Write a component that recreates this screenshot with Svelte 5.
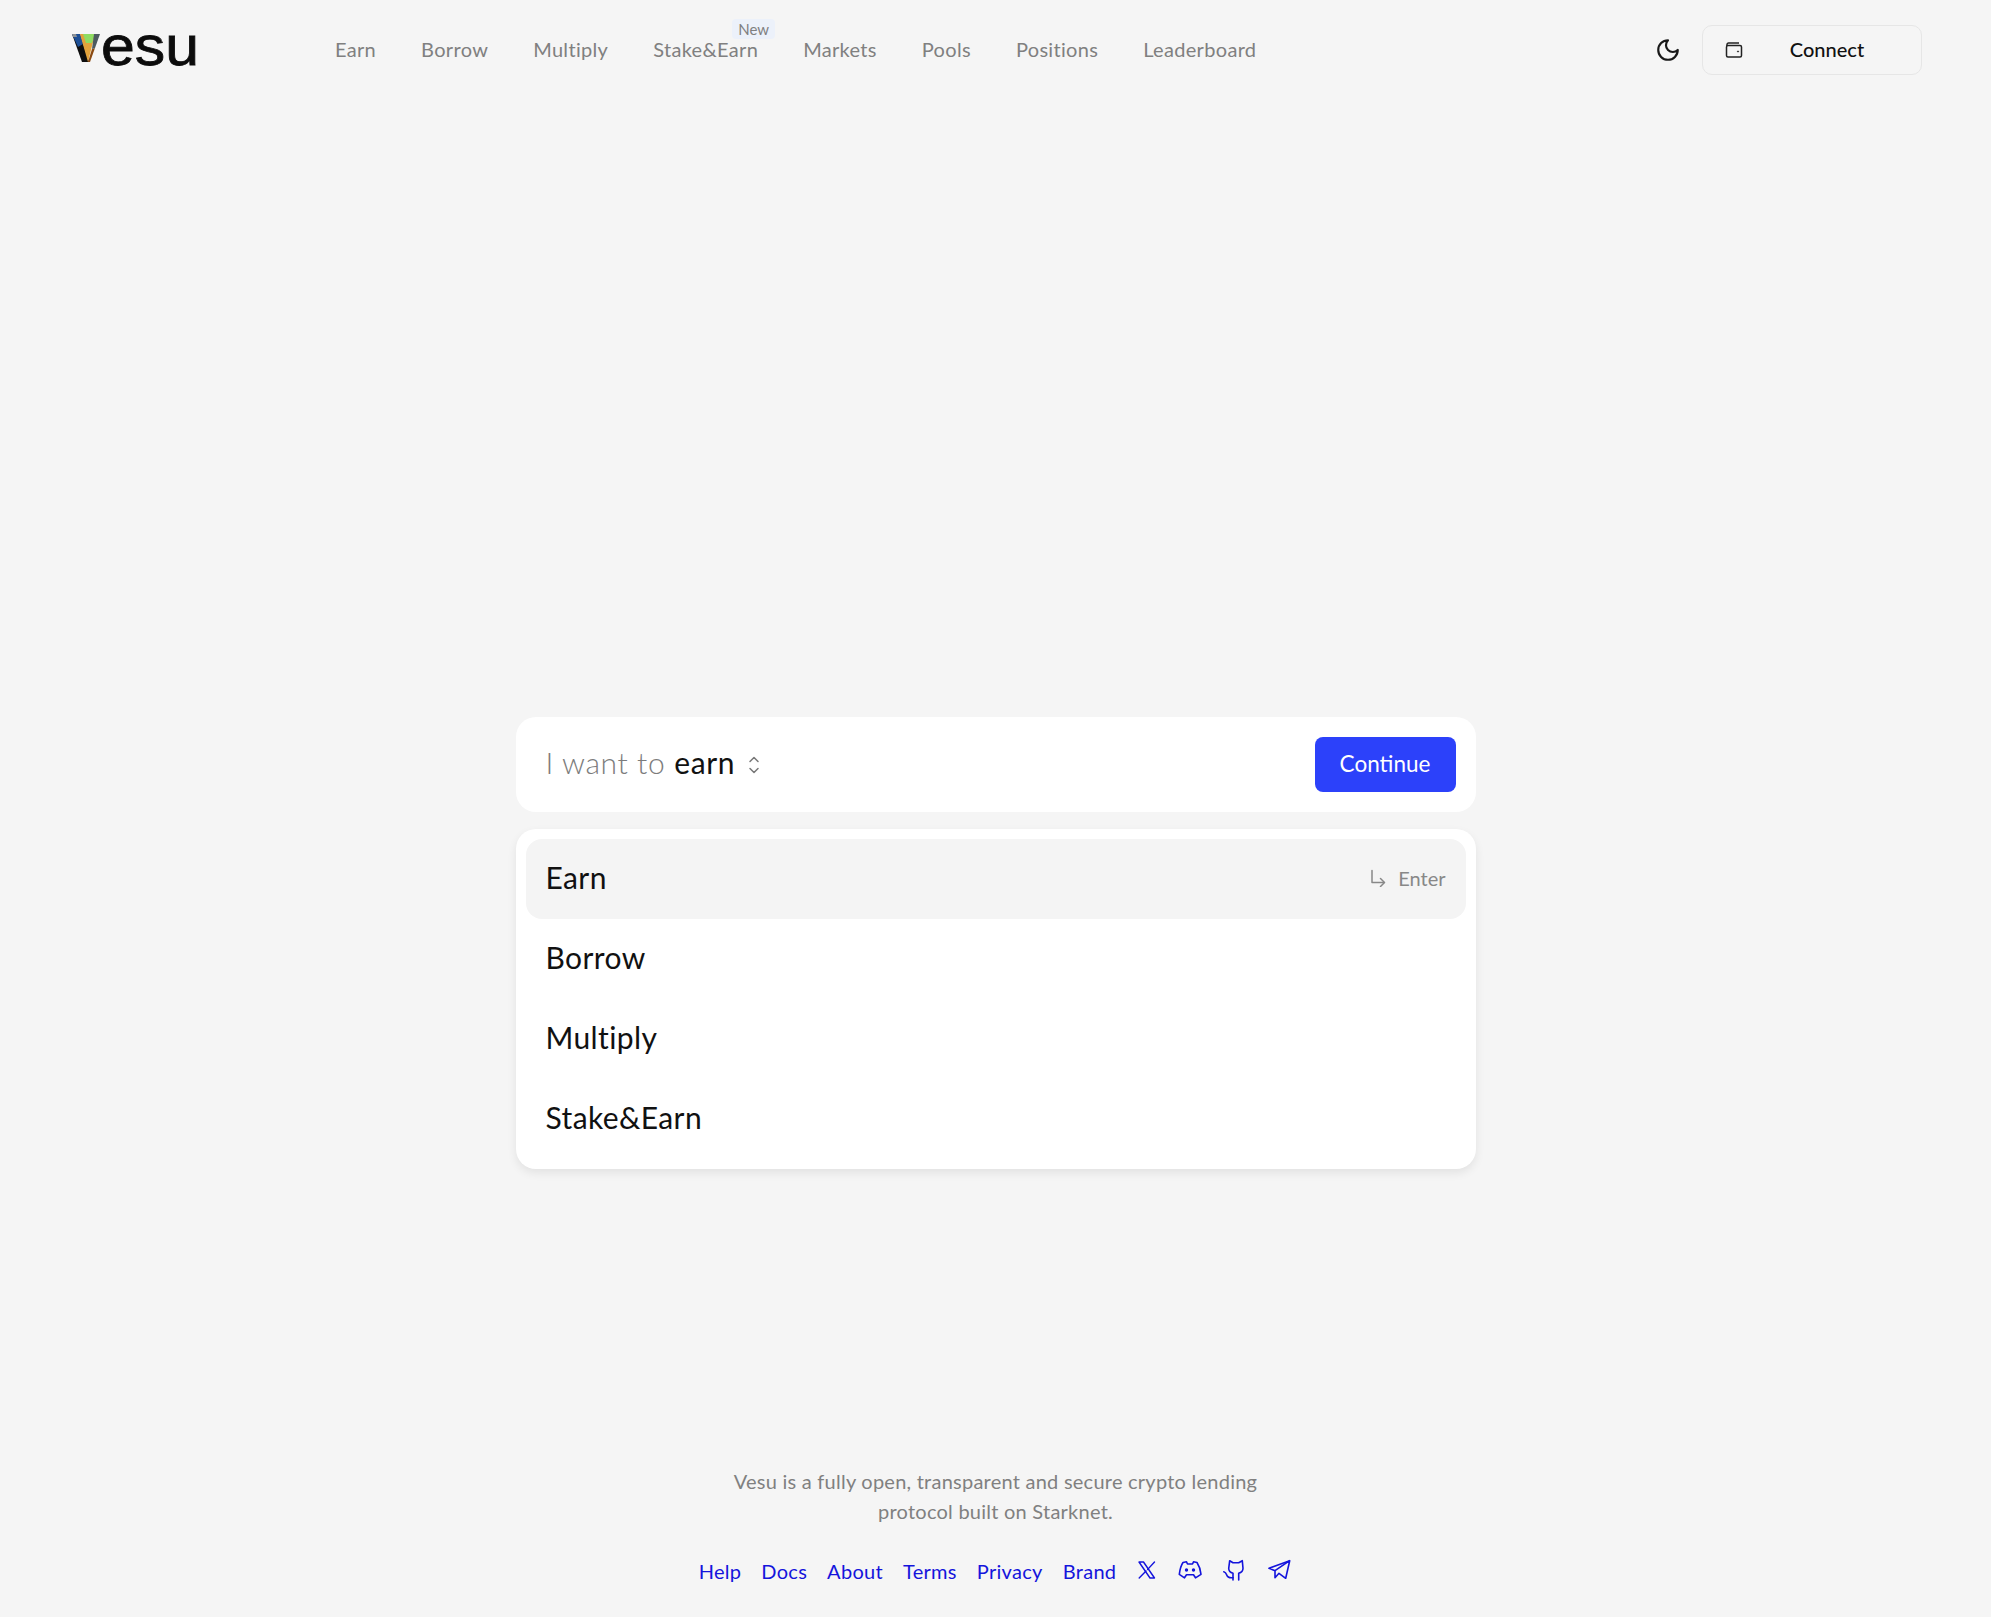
<script>
	const navItems = ['Earn', 'Borrow', 'Multiply', 'Stake&Earn', 'Markets', 'Pools', 'Positions', 'Leaderboard'];
	const options = ['Earn', 'Borrow', 'Multiply', 'Stake&Earn'];
	const footerLinks = ['Help', 'Docs', 'About', 'Terms', 'Privacy', 'Brand'];
</script>

<div class="page">
	<header class="header">
		<div class="logo">
			<svg class="logo-mark" width="29" height="30" viewBox="0 0 29 30">
				<path d="M0 1h8l9 28h-7z" fill="#0e0e0e" />
				<path d="M0 1h8l3 10-5 3z" fill="#1d4f96" />
				<path d="M0 1h4l1 3H1z" fill="#8d9296" />
				<path d="M8 1h15l-7 28z" fill="#e2a23b" />
				<path d="M11 1h12l-3 9h-6z" fill="#8fdc62" />
				<path d="M16 29l4-13 3-1-5 14z" fill="#8a4a12" />
				<path d="M22 1h6l-5 14-3 1z" fill="#4c5a60" />
			</svg>
			<span class="logo-text">esu</span>
		</div>
		<nav class="nav">
			{#each navItems as item}
				<a class="nav-link" href="#top">
					{item}
					{#if item === 'Stake&Earn'}
						<span class="badge">New</span>
					{/if}
				</a>
			{/each}
		</nav>
		<div class="actions">
			<svg class="moon" width="26" height="26" viewBox="0 0 24 24" fill="none" stroke="#181818" stroke-width="2" stroke-linecap="round" stroke-linejoin="round">
				<path d="M12 3a6 6 0 0 0 9 9 9 9 0 1 1-9-9Z" />
			</svg>
			<button class="connect">
				<svg width="20" height="20" viewBox="0 0 20 20" fill="none" stroke="#222" stroke-width="1.5" stroke-linejoin="round">
					<path d="M3 6V4.500A1.500 1.500 0 0 1 4.500 3H15" />
					<rect x="2.500" y="5.500" width="15" height="11.500" rx="1.500" />
					<circle cx="14" cy="11.500" r="0.600" fill="#222" stroke-width="0.800" />
				</svg>
				<span>Connect</span>
			</button>
		</div>
	</header>

	<main class="main">
		<div class="prompt card">
			<div class="sentence">
				<span class="muted">I want to</span>
				<span class="choice">earn</span>
				<svg width="12" height="20" viewBox="0 0 12 20" fill="none" stroke="#777" stroke-width="1.500" stroke-linecap="round" stroke-linejoin="round">
					<path d="M2 6.500l4-4 4 4" />
					<path d="M2 13.500l4 4 4-4" />
				</svg>
			</div>
			<button class="continue">Continue</button>
		</div>

		<ul class="options card">
			{#each options as option, i}
				<li class="option" class:active={i === 0}>
					<span class="label">{option}</span>
					{#if i === 0}
						<span class="enter">
							<svg width="16" height="18" viewBox="0 0 16 18" fill="none" stroke="#888" stroke-width="1.500" stroke-linecap="round" stroke-linejoin="round">
								<path d="M2 1.500v12h12" />
								<path d="M10.500 9.500l4 4-4 4" />
							</svg>
							Enter
						</span>
					{/if}
				</li>
			{/each}
		</ul>
	</main>

	<footer class="footer">
		<p class="blurb">Vesu is a fully open, transparent and secure crypto lending<br />protocol built on Starknet.</p>
		<div class="links">
			{#each footerLinks as link}
				<a href="#top">{link}</a>
			{/each}
			<div class="socials">
				<svg width="20" height="20" viewBox="0 0 20 20" fill="none" stroke="#1414dc" stroke-width="1.400" stroke-linejoin="round">
					<path d="M2 2h4.500l11 16H13z" />
					<path d="M17.500 2l-6.800 7.400M9 11l-6.800 7" stroke-linecap="round" />
				</svg>
				<svg width="24" height="22" viewBox="0 0 24 22" fill="none" stroke="#1414dc" stroke-width="1.600" stroke-linejoin="round">
					<path d="M5 3.500L8.500 2.800L9.500 5h5L15.500 2.800L19 3.500C21 6.500 22.500 11 23 15.300L17.500 18.800L15.500 15.800h-7L6.500 18.800L1.300 15.300C1.800 11 3 6.500 5 3.500Z" />
					<circle cx="8.500" cy="11" r="0.900" fill="#1414dc" />
					<circle cx="15.500" cy="11" r="0.900" fill="#1414dc" />
				</svg>
				<svg width="24" height="22" viewBox="0 0 24 22" fill="none" stroke="#1414dc" stroke-width="1.600" stroke-linecap="round" stroke-linejoin="round">
					<path d="M10 21v-6.700C7 13.500 5.700 12 5.700 9.300L6.700 1.700L10 3.700h5.700L19.300 1.700L20 9.300C20 12 18.500 13.500 15.700 14.300V21" />
					<path d="M10 18.700C6.500 19.200 4.500 18.500 3.500 15.500C3 14 2 13 .8 12.700" />
				</svg>
				<svg width="24" height="22" viewBox="0 0 24 22" fill="none" stroke="#1414dc" stroke-width="1.600" stroke-linejoin="round">
					<path d="M1 9.300L21.700 1.700L17.700 19.300L11 14.300L7 18.700V11.700Z" />
					<path d="M7 11.700L21.700 1.700" />
				</svg>
			</div>
		</div>
	</footer>
</div>

<style>
	:global(body) {
		background: #f5f5f5;
		font-family: Lato, "Open Sans", sans-serif;
		font-variant-ligatures: none;
	}

	.page {
		min-height: 1617px;
		display: flex;
		flex-direction: column;
	}

	.header {
		display: flex;
		align-items: center;
		height: 100px;
		padding: 0 69px 0 72px;
	}

	.logo {
		display: flex;
		align-items: center;
		width: 263px;
		height: 30px;
		margin-top: -4px;
	}

	.logo-mark {
		flex: none;
	}

	.logo-text {
		font-family: "Liberation Sans", sans-serif;
		font-size: 56px;
		line-height: 30px;
		color: #0c0c0c;
		margin-top: -4px;
		-webkit-text-stroke: 0.8px #0c0c0c;
		transform: scaleX(1.085);
		transform-origin: left center;
	}

	.nav {
		display: flex;
		gap: 45px;
		flex: 1;
		padding-bottom: 2px;
	}

	.nav-link {
		position: relative;
		font-size: 20px;
		letter-spacing: 0.32px;
		color: #808080;
		text-decoration: none;
	}

	.badge {
		position: absolute;
		top: -18px;
		right: -17px;
		padding: 1px 6px;
		font-size: 15px;
		letter-spacing: 0;
		line-height: 18px;
		border-radius: 4px;
		background: #ecf1fa;
	}

	.actions {
		display: flex;
		align-items: center;
		gap: 21px;
	}

	.connect {
		display: flex;
		align-items: center;
		width: 220px;
		height: 50px;
		padding: 0 11px 0 21px;
		background: transparent;
		border: 1px solid #e6e6e6;
		border-radius: 10px;
		font: 500 20px Lato, sans-serif;
		color: #111;
	}

	.connect span {
		flex: 1;
		text-align: center;
		padding-bottom: 2px;
	}

	.main {
		flex: 1;
		display: flex;
		flex-direction: column;
		align-items: center;
		gap: 17px;
		padding-top: 617px;
	}

	.card {
		width: 960px;
		background: #fff;
		border-radius: 20px;
		box-sizing: border-box;
	}

	.prompt {
		height: 95px;
		display: flex;
		align-items: center;
		justify-content: space-between;
		padding: 0 20px 0 30px;
	}

	.sentence {
		display: flex;
		align-items: center;
		font-size: 30px;
		letter-spacing: 0.6px;
	}

	.muted {
		color: #7c7c7c;
		font-weight: 300;
		padding-bottom: 5px;
	}

	.choice {
		color: #111;
		margin: 0 13px 0 9px;
		padding-bottom: 5px;
	}

	.continue {
		width: 141px;
		height: 55px;
		padding: 0 0 2px;
		border: none;
		border-radius: 8px;
		background: #2c41fa;
		color: #fff;
		font: 400 22.500px Lato, sans-serif;
	}

	.options {
		list-style: none;
		margin: 0;
		padding: 10px;
		box-shadow: 0 4px 10px rgba(0, 0, 0, 0.08);
	}

	.option {
		height: 80px;
		display: flex;
		align-items: center;
		justify-content: space-between;
		padding: 0 20px;
		border-radius: 16px;
		font-size: 30px;
		color: #111;
	}

	.option.active {
		background: #f4f4f4;
	}

	.label {
		padding-bottom: 4px;
		letter-spacing: 0.4px;
	}

	.enter {
		display: flex;
		align-items: center;
		gap: 12px;
		padding-bottom: 2px;
		font-size: 20px;
		color: #888;
	}

	.footer {
		display: flex;
		flex-direction: column;
		align-items: center;
		padding-bottom: 31px;
	}

	.blurb {
		margin: 0 0 30px;
		text-align: center;
		font-size: 20px;
		letter-spacing: 0.24px;
		line-height: 30px;
		color: #808080;
	}

	.links {
		display: flex;
		align-items: center;
		gap: 20px;
		font-size: 20px;
		letter-spacing: 0.3px;
		line-height: 30px;
	}

	.links a {
		color: #1414dc;
		text-decoration: none;
	}

	.socials {
		display: flex;
		align-items: center;
		gap: 21px;
		margin: 0 0 3px 1px;
	}
</style>
